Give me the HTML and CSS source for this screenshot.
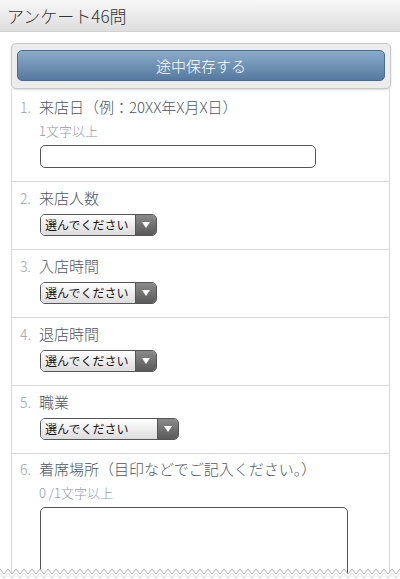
FILE: index.html
```html
<!DOCTYPE html>
<html lang="ja">
<head>
    <meta charset="UTF-8">
    <meta name="viewport" content="width=device-width, initial-scale=1.0">
    <title>アンケート46問</title>
    <link rel="stylesheet" href="styles.css">
</head>
<body>

    <header class="title-bar">アンケート46問</header>

    <div class="wrap">
        <div class="save-box">
            <button type="button" class="save-btn">途中保存する</button>
        </div>

        <ol class="questions">
            <li class="q">
                <div class="q-label"><span class="q-num">1.</span>来店日（例：20XX年X月X日）</div>
                <div class="q-note">1文字以上</div>
                <input type="text" class="q-input">
            </li>
            <li class="q">
                <div class="q-label"><span class="q-num">2.</span>来店人数</div>
                <div class="pick"><span class="pick-text">選んでください</span><span class="pick-arrow"></span></div>
            </li>
            <li class="q">
                <div class="q-label"><span class="q-num">3.</span>入店時間</div>
                <div class="pick"><span class="pick-text">選んでください</span><span class="pick-arrow"></span></div>
            </li>
            <li class="q">
                <div class="q-label"><span class="q-num">4.</span>退店時間</div>
                <div class="pick"><span class="pick-text">選んでください</span><span class="pick-arrow"></span></div>
            </li>
            <li class="q">
                <div class="q-label"><span class="q-num">5.</span>職業</div>
                <div class="pick pick-wide"><span class="pick-text">選んでください</span><span class="pick-arrow"></span></div>
            </li>
            <li class="q">
                <div class="q-label"><span class="q-num">6.</span>着席場所（目印などでご記入ください。）</div>
                <div class="q-note">0 /1文字以上</div>
                <textarea class="q-area"></textarea>
            </li>
        </ol>
    </div>

    <!-- torn edge of the capture -->
    <svg class="torn" width="400" height="12" viewBox="0 0 400 12">
        <polygon points="0,2 4,7 8,2 12,7 16,2 20,7 24,2 28,7 32,2 36,7 40,2 44,7 48,2 52,7 56,2 60,7 64,2 68,7 72,2 76,7 80,2 84,7 88,2 92,7 96,2 100,7 104,2 108,7 112,2 116,7 120,2 124,7 128,2 132,7 136,2 140,7 144,2 148,7 152,2 156,7 160,2 164,7 168,2 172,7 176,2 180,7 184,2 188,7 192,2 196,7 200,2 204,7 208,2 212,7 216,2 220,7 224,2 228,7 232,2 236,7 240,2 244,7 248,2 252,7 256,2 260,7 264,2 268,7 272,2 276,7 280,2 284,7 288,2 292,7 296,2 300,7 304,2 308,7 312,2 316,7 320,2 324,7 328,2 332,7 336,2 340,7 344,2 348,7 352,2 356,7 360,2 364,7 368,2 372,7 376,2 380,7 384,2 388,7 392,2 396,7 400,2 400,12 0,12" fill="#fff" stroke="none"/>
        <polyline points="0,2 4,7 8,2 12,7 16,2 20,7 24,2 28,7 32,2 36,7 40,2 44,7 48,2 52,7 56,2 60,7 64,2 68,7 72,2 76,7 80,2 84,7 88,2 92,7 96,2 100,7 104,2 108,7 112,2 116,7 120,2 124,7 128,2 132,7 136,2 140,7 144,2 148,7 152,2 156,7 160,2 164,7 168,2 172,7 176,2 180,7 184,2 188,7 192,2 196,7 200,2 204,7 208,2 212,7 216,2 220,7 224,2 228,7 232,2 236,7 240,2 244,7 248,2 252,7 256,2 260,7 264,2 268,7 272,2 276,7 280,2 284,7 288,2 292,7 296,2 300,7 304,2 308,7 312,2 316,7 320,2 324,7 328,2 332,7 336,2 340,7 344,2 348,7 352,2 356,7 360,2 364,7 368,2 372,7 376,2 380,7 384,2 388,7 392,2 396,7 400,2" fill="none" stroke="#aaa" stroke-width="1"/>
        <polyline points="0,6 4,11 8,6 12,11 16,6 20,11 24,6 28,11 32,6 36,11 40,6 44,11 48,6 52,11 56,6 60,11 64,6 68,11 72,6 76,11 80,6 84,11 88,6 92,11 96,6 100,11 104,6 108,11 112,6 116,11 120,6 124,11 128,6 132,11 136,6 140,11 144,6 148,11 152,6 156,11 160,6 164,11 168,6 172,11 176,6 180,11 184,6 188,11 192,6 196,11 200,6 204,11 208,6 212,11 216,6 220,11 224,6 228,11 232,6 236,11 240,6 244,11 248,6 252,11 256,6 260,11 264,6 268,11 272,6 276,11 280,6 284,11 288,6 292,11 296,6 300,11 304,6 308,11 312,6 316,11 320,6 324,11 328,6 332,11 336,6 340,11 344,6 348,11 352,6 356,11 360,6 364,11 368,6 372,11 376,6 380,11 384,6 388,11 392,6 396,11 400,6" fill="none" stroke="#d4d4d4" stroke-width="1"/>
    </svg>

</body>
</html>
```

FILE: styles.css
```css
body {
    margin: 0;
    height: 579px;
    overflow: hidden;
    background: #fff;
    font-family: "Noto Sans CJK JP", "Noto Sans", sans-serif;
    font-weight: 300;
    color: #333;
}

.title-bar {
    height: 32px;
    line-height: 32px;
    padding-left: 7px;
    font-size: 17px;
    color: #333;
    background: linear-gradient(to bottom, #f8f8f8, #dddddd);
    border-bottom: 1px solid #d0d0d0;
    box-sizing: border-box;
}

.wrap {
    margin: 11px 9px 0 11px;
}

.save-box {
    position: relative;
    z-index: 1;
    padding: 6px 5px 7px 5px;
    background: #ececec;
    border: 1px solid #c6c6c6;
    border-radius: 5px;
    box-shadow: 0 1px 2px rgba(0, 0, 0, 0.15);
}

.save-btn {
    display: block;
    width: 100%;
    height: 31px;
    padding: 0;
    font-family: "Noto Sans CJK JP", sans-serif;
    font-weight: 300;
    font-size: 15px;
    color: #fff;
    background: linear-gradient(to bottom, #8aaccb, #56799f);
    border: 1px solid #4a6b91;
    border-radius: 5px;
}

.questions {
    list-style: none;
    margin: 0;
    padding: 0;
    width: 379px;
    border-left: 1px solid #d8d8d8;
    border-right: 1px solid #d8d8d8;
    box-sizing: border-box;
}

.q {
    padding: 5px 0 13px 27px;
    border-bottom: 1px solid #d8d8d8;
}

.q:first-child {
    padding-top: 7px;
}

.q:last-child {
    border-bottom: none;
    padding-top: 4px;
}

.q-label {
    position: relative;
    font-size: 15px;
    line-height: 22px;
    color: #4b5564;
    margin-bottom: 5px;
}

.q-num {
    position: absolute;
    left: -19px;
    color: #9aa2ae;
    font-size: 14px;
}

.q-note {
    font-size: 13px;
    line-height: 16px;
    color: #8f9aab;
    margin: 3px 0 6px 0;
}

.q-input {
    display: block;
    width: 276px;
    height: 23px;
    margin-left: 1px;
    box-sizing: border-box;
    border: 1px solid #555;
    border-radius: 5px;
    background: #fff;
}

.q-area {
    display: block;
    width: 308px;
    height: 80px;
    margin-left: 1px;
    box-sizing: border-box;
    border: 1px solid #555;
    border-radius: 5px;
    resize: none;
}

.pick {
    display: flex;
    width: 117px;
    height: 22px;
    margin-left: 1px;
    box-sizing: border-box;
    border: 1px solid #555;
    border-radius: 5px;
    overflow: hidden;
}

.pick-wide {
    width: 139px;
}

.pick-text {
    flex: 1;
    font-size: 12px;
    font-weight: 400;
    line-height: 20px;
    padding-left: 4px;
    color: #111;
    background: linear-gradient(to bottom, #ffffff, #dcdcdc);
}

.pick-arrow {
    width: 20px;
    display: flex;
    align-items: center;
    justify-content: center;
    background: linear-gradient(to bottom, #8a8a8a, #5a5a5a);
    border-left: 1px solid #555;
}

.pick-arrow::after {
    content: "";
    border-left: 4px solid transparent;
    border-right: 4px solid transparent;
    border-top: 6px solid #fff;
}

.torn {
    position: fixed;
    left: 0;
    bottom: 0;
}
```
